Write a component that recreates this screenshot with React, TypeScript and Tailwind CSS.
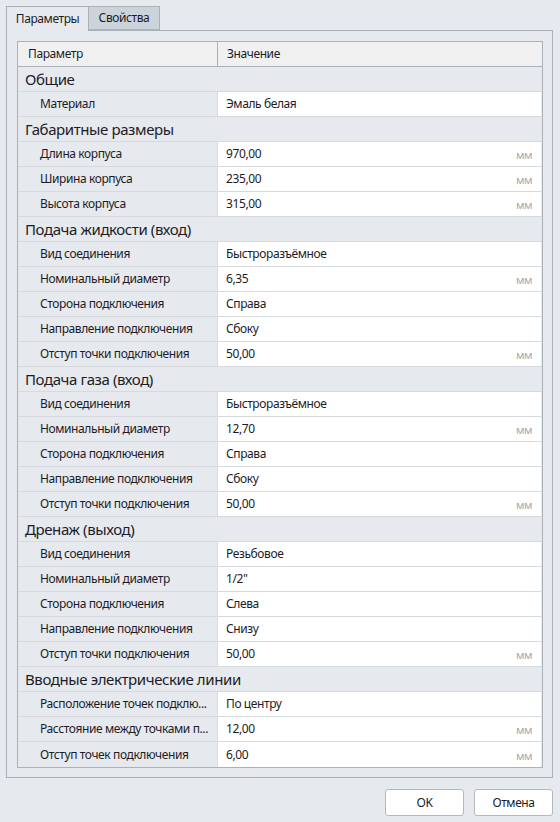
type Row =
  | { kind: "section"; title: string }
  | { kind: "prop"; name: string; value: string; unit?: string };

const rows: Row[] = [
  { kind: "section", title: "Общие" },
  { kind: "prop", name: "Материал", value: "Эмаль белая" },
  { kind: "section", title: "Габаритные размеры" },
  { kind: "prop", name: "Длина корпуса", value: "970,00", unit: "мм" },
  { kind: "prop", name: "Ширина корпуса", value: "235,00", unit: "мм" },
  { kind: "prop", name: "Высота корпуса", value: "315,00", unit: "мм" },
  { kind: "section", title: "Подача жидкости (вход)" },
  { kind: "prop", name: "Вид соединения", value: "Быстроразъёмное" },
  { kind: "prop", name: "Номинальный диаметр", value: "6,35", unit: "мм" },
  { kind: "prop", name: "Сторона подключения", value: "Справа" },
  { kind: "prop", name: "Направление подключения", value: "Сбоку" },
  { kind: "prop", name: "Отступ точки подключения", value: "50,00", unit: "мм" },
  { kind: "section", title: "Подача газа (вход)" },
  { kind: "prop", name: "Вид соединения", value: "Быстроразъёмное" },
  { kind: "prop", name: "Номинальный диаметр", value: "12,70", unit: "мм" },
  { kind: "prop", name: "Сторона подключения", value: "Справа" },
  { kind: "prop", name: "Направление подключения", value: "Сбоку" },
  { kind: "prop", name: "Отступ точки подключения", value: "50,00", unit: "мм" },
  { kind: "section", title: "Дренаж (выход)" },
  { kind: "prop", name: "Вид соединения", value: "Резьбовое" },
  { kind: "prop", name: "Номинальный диаметр", value: "1/2\"" },
  { kind: "prop", name: "Сторона подключения", value: "Слева" },
  { kind: "prop", name: "Направление подключения", value: "Снизу" },
  { kind: "prop", name: "Отступ точки подключения", value: "50,00", unit: "мм" },
  { kind: "section", title: "Вводные электрические линии" },
  { kind: "prop", name: "Расположение точек подклю...", value: "По центру" },
  { kind: "prop", name: "Расстояние между точками п...", value: "12,00", unit: "мм" },
  { kind: "prop", name: "Отступ точек подключения", value: "6,00", unit: "мм" },
];

const font = { fontFamily: "'Noto Sans', 'Open Sans', sans-serif" };

export default function App() {
  return (
    <div
      className="w-[560px] h-[822px] bg-[#e6e9ed] text-[#1c1c28] flex flex-col pt-[6px] pl-[6px] pr-[7px] tracking-[-0.4px]"
      style={font}
    >
      {/* вкладки */}
      <div className="flex h-[24px]">
        <div className="w-[83px] border border-b-0 border-[#aab1b9] bg-[#e6e9ed] text-[12px] flex items-center justify-center relative z-10 -mb-px">
          Параметры
        </div>
        <div className="w-[71px] border border-l-0 border-[#aab1b9] bg-[#cdd3da] text-[12px] flex items-center justify-center">
          Свойства
        </div>
      </div>

      <div className="h-[748px] border border-[#aab1b9] px-[10px] pt-[10px]">
        <div className="w-[526px] border border-[#aab1b9] bg-[#e6e9ed] flex flex-col">
          <div className="h-[25px] flex border-b border-[#aab1b9] bg-[#f0f0f0] text-[12px]">
            <div className="w-[200px] border-r border-[#aab1b9] pl-[10px] flex items-center">Параметр</div>
            <div className="flex-1 pl-[9px] flex items-center">Значение</div>
          </div>
          {rows.map((r, i) => {
            const last = i === rows.length - 1;
            const line = last ? "" : "border-b border-[#d6d9dd]";
            if (r.kind === "section") {
              return (
                <div key={i} className={`h-[25px] flex items-center pl-[7px] text-[15px] ${line}`}>
                  {r.title}
                </div>
              );
            }
            return (
              <div key={i} className={`h-[25px] flex text-[12px] ${line}`}>
                <div className="w-[200px] border-r border-[#d6d9dd] pl-[22px] flex items-center whitespace-nowrap">
                  {r.name}
                </div>
                <div className="flex-1 bg-white flex items-center pl-[8px] pr-[9px] mr-px">
                  <span className="flex-1">{r.value}</span>
                  {r.unit && <span className="text-[11px] text-[#a3a9b1] pt-[3px]">{r.unit}</span>}
                </div>
              </div>
            );
          })}
        </div>
      </div>

      <div className="flex justify-end gap-[10px] mt-[11px]">
        <button className="w-[79px] h-[27px] bg-white border border-[#b3b8be] rounded-[3px] text-[12px]">OK</button>
        <button className="w-[79px] h-[27px] bg-white border border-[#b3b8be] rounded-[3px] text-[12px]">Отмена</button>
      </div>
    </div>
  );
}
